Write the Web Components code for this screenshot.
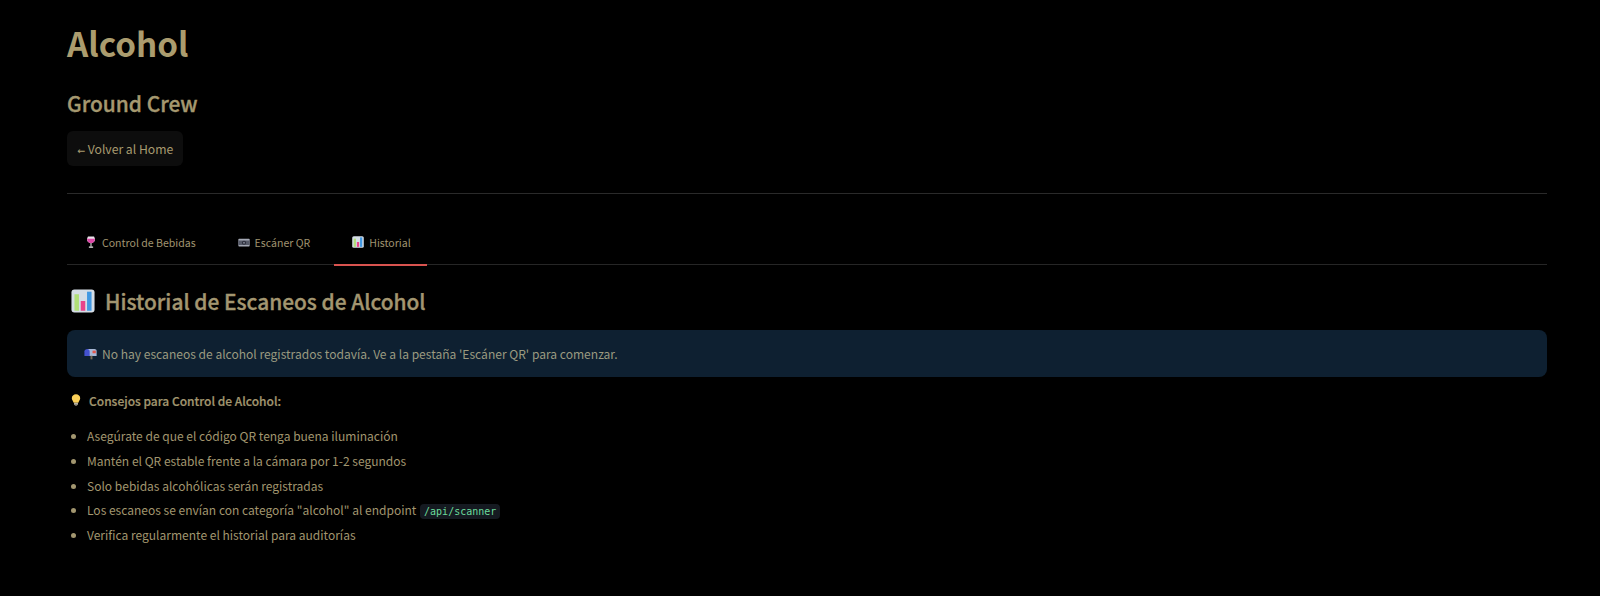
<!DOCTYPE html>
<html lang="es">
<head>
<meta charset="utf-8">
<title>Alcohol</title>
<style>
  html, body { margin: 0; background: #000; }
  body { font-family: "Noto Sans CJK SC", "Source Sans Pro", "Noto Sans", sans-serif; color: #a89b70; }
  tips-list code { font-family: "DejaVu Sans Mono", monospace; font-size: 10px;
    color: #6cdc9c; background: #151a21; padding: 2px 4px; border-radius: 4px; margin-left: 1px; }
</style>
</head>
<body>
<page-shell>
  <page-header title="Alcohol" subtitle="Ground Crew" back="Volver al Home"></page-header>
  <tab-bar>
    <tab-item icon="wine">Control de Bebidas</tab-item>
    <tab-item icon="camera">Escáner QR</tab-item>
    <tab-item icon="chart" selected>Historial</tab-item>
  </tab-bar>
  <section-title icon="chart">Historial de Escaneos de Alcohol</section-title>
  <info-alert icon="mailbox">No hay escaneos de alcohol registrados todavía. Ve a la pestaña 'Escáner QR' para comenzar.</info-alert>
  <tips-list icon="bulb" heading="Consejos para Control de Alcohol:">
    <li>Asegúrate de que el código QR tenga buena iluminación</li>
    <li>Mantén el QR estable frente a la cámara por 1-2 segundos</li>
    <li>Solo bebidas alcohólicas serán registradas</li>
    <li>Los escaneos se envían con categoría "alcohol" al endpoint <code>/api/scanner</code></li>
    <li>Verifica regularmente el historial para auditorías</li>
  </tips-list>
</page-shell>

<script>
const ICONS = {
  wine: `<svg viewBox="0 0 16 16"><path d="M4 .5h8c1 1.800 1.300 3.200 1.300 4.300 0 2.800-2.200 4.700-5.300 4.700S2.700 7.600 2.700 4.800C2.700 3.700 3 2.300 4 .5z" fill="#e9e3ea"/><path d="M2.800 3.800h10.400c.4 3-1.800 5.700-5.200 5.700S2.400 6.800 2.800 3.800z" fill="#dc46a6"/><rect x="7.300" y="9.400" width="1.400" height="4.800" fill="#ddd"/><rect x="5" y="14" width="6" height="1.500" rx=".7" fill="#eee"/></svg>`,
  camera: `<svg viewBox="0 0 16 16"><rect x=".5" y="3.500" width="15" height="10.500" rx="1" fill="#a4a8b4"/><rect x=".5" y="6" width="15" height="6" fill="#565a68"/><circle cx="8" cy="9" r="2.800" fill="#2c2e3a"/><circle cx="8" cy="9" r="1.300" fill="#7d8190"/></svg>`,
  chart: `<svg viewBox="0 0 16 16"><rect x=".3" y=".3" width="15.400" height="15.400" rx="2" fill="#d5dde6"/><rect x="2.300" y="3.500" width="3" height="11" fill="#b0de78"/><rect x="6.500" y="8" width="3" height="6.500" fill="#e8438a"/><rect x="10.700" y="1.800" width="3" height="12.700" fill="#4298e2"/></svg>`,
  mailbox: `<svg viewBox="0 0 16 16"><path d="M4 2.500h9c1.300 0 2.500 1 2.500 2.200v6.300H6z" fill="#a8b8d6"/><path d="M4 2.500c1.700 0 3 1.300 3 3V11H.5V5.500c0-1.700 1.800-3 3.500-3z" fill="#4452cf"/><rect x="8" y="10.800" width="2.400" height="4.400" fill="#7a6a55"/><rect x="10.500" y="4.500" width="4" height="3.200" fill="#e2574c"/></svg>`,
  bulb: `<svg viewBox="0 0 16 16"><path d="M8 .3c3.200 0 5.600 2.300 5.600 5.200 0 2.500-2 3.700-2.500 6.300H4.900C4.400 9.200 2.400 8 2.400 5.500 2.400 2.600 4.800.3 8 .3z" fill="#fbd058"/><rect x="5.400" y="11.800" width="5.200" height="2.600" fill="#b9b3a6"/><rect x="6.400" y="14.400" width="3.200" height="1.300" rx=".5" fill="#8c8678"/></svg>`
};

class PageShell extends HTMLElement {
  connectedCallback() {
    this.attachShadow({ mode: 'open' }).innerHTML = `
      <style>
        :host { display: block; padding: 0 53px 0 67px; height: 596px; box-sizing: border-box; }
      </style>
      <slot></slot>`;
  }
}

class PageHeader extends HTMLElement {
  connectedCallback() {
    this.attachShadow({ mode: 'open' }).innerHTML = `
      <style>
        :host { display: block; }
        h1 { margin: 0; padding-top: 18px; font-size: 33.200px; line-height: 50px; font-weight: 700; color: #ab9c6e; }
        h2 { margin: 0; padding-top: 21px; font-size: 20.900px; line-height: 28px; font-weight: 500; color: #a5986f;
             -webkit-text-stroke: .35px currentColor; }
        a { display: block; width: fit-content; margin-top: 14px; padding: 0 10px; height: 35px; line-height: 36px;
            background: #0d0d0d; border-radius: 6px; font-size: 12.200px; color: #a89b70; }
        .arrow { font-family: "DejaVu Sans", sans-serif; font-size: 9.500px; margin: 0 -.5px 0 .5px; }
        hr { border: 0; height: 1px; background: #2a2a2a; margin: 27px 0 0; }
      </style>
      <h1>${this.getAttribute('title')}</h1>
      <h2>${this.getAttribute('subtitle')}</h2>
      <a><span class="arrow">←</span> ${this.getAttribute('back')}</a>
      <hr>`;
  }
}

class TabBar extends HTMLElement {
  connectedCallback() {
    this.attachShadow({ mode: 'open' }).innerHTML = `
      <style>
        :host { display: flex; gap: 8px; margin-top: 28px; height: 42px; border-bottom: 1px solid #262626; }
      </style>
      <slot></slot>`;
  }
}

class TabItem extends HTMLElement {
  connectedCallback() {
    this.attachShadow({ mode: 'open' }).innerHTML = `
      <style>
        :host { display: flex; align-items: center; gap: 5px; padding: 0 16px 2px 18px; height: 42px; box-sizing: border-box;
                font-size: 10.550px; color: #a09470; }
        :host([selected]) { height: 44px; padding-bottom: 2px; border-bottom: 2px solid #d9534f; }
        svg { width: 12px; height: 12px; display: block; }
      </style>
      ${ICONS[this.getAttribute('icon')]}<slot></slot>`;
  }
}

class SectionTitle extends HTMLElement {
  connectedCallback() {
    this.attachShadow({ mode: 'open' }).innerHTML = `
      <style>
        :host { display: flex; align-items: center; gap: 10px; margin: 19px 0 0 4px; height: 34px;
                font-size: 20.900px; font-weight: 500; color: #a39670; -webkit-text-stroke: .35px currentColor; }
        svg { width: 24px; height: 24px; display: block; }
      </style>
      ${ICONS[this.getAttribute('icon')]}<slot></slot>`;
  }
}

class InfoAlert extends HTMLElement {
  connectedCallback() {
    this.attachShadow({ mode: 'open' }).innerHTML = `
      <style>
        :host { display: flex; align-items: center; gap: 5px; margin-top: 12px; height: 47px; padding-left: 17px;
                background: #0e2031; border-radius: 8px; font-size: 12.050px; color: #9a9a80; }
        svg { width: 13px; height: 13px; display: block; }
      </style>
      ${ICONS[this.getAttribute('icon')]}<slot></slot>`;
  }
}

class TipsList extends HTMLElement {
  connectedCallback() {
    this.attachShadow({ mode: 'open' }).innerHTML = `
      <style>
        :host { display: block; margin-top: 13px; font-size: 12.030px; color: #a2966f; }
        p { display: flex; align-items: center; gap: 7px; margin: 0 0 0 3px; height: 20px; font-weight: 500; font-size: 12px;
            -webkit-text-stroke: .2px currentColor; }
        svg { width: 12px; height: 14px; display: block; }
        ul { margin: 14.400px 0 0; padding: 0 0 0 20px; }
        ::slotted(li) { height: 24.700px; line-height: 24.700px; }
      </style>
      <p>${ICONS[this.getAttribute('icon')]}<span>${this.getAttribute('heading')}</span></p>
      <ul><slot></slot></ul>`;
  }
}

customElements.define('page-shell', PageShell);
customElements.define('page-header', PageHeader);
customElements.define('tab-bar', TabBar);
customElements.define('tab-item', TabItem);
customElements.define('section-title', SectionTitle);
customElements.define('info-alert', InfoAlert);
customElements.define('tips-list', TipsList);
</script>
</body>
</html>
